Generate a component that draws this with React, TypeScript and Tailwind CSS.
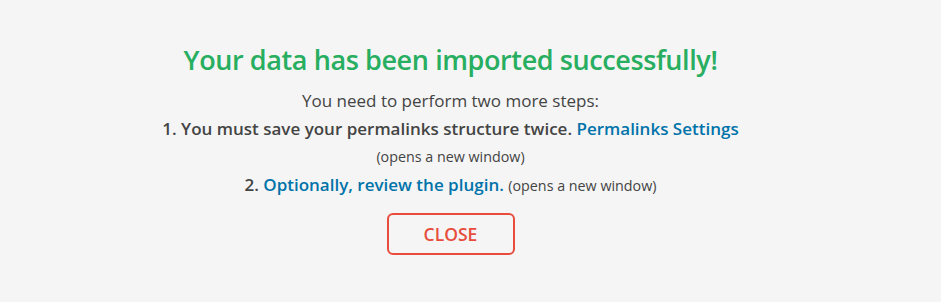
export default function App() {
  return (
    <div
      className="w-[941px] h-[302px] bg-[#f5f5f5] flex flex-col items-center pt-[40px] pr-[40px] text-[#444]"
      style={{ fontFamily: '"Open Sans", "Noto Sans", sans-serif' }}
    >
      <h2 className="text-[27px] leading-[40px] font-semibold text-[#27ae60] tracking-[-0.4px]">
        Your data has been imported successfully!
      </h2>
      <p className="mt-[9px] text-[17px] leading-[24px]">You need to perform two more steps:</p>
      <p className="mt-[4px] text-[17px] leading-[24px] font-semibold">
        1. You must save your permalinks structure twice.{" "}
        <a className="text-[#0073aa]">Permalinks Settings</a>
      </p>
      <p className="mt-[4px] text-[14.3px] leading-[24px]">(opens a new window)</p>
      <p className="mt-[4px] text-[17px] leading-[24px]">
        <span className="font-semibold">2. </span>
        <a className="font-semibold text-[#0073aa]">Optionally, review the plugin.</a>{" "}
        <span className="text-[14.3px]">(opens a new window)</span>
      </p>
      <button className="mt-[15px] w-[128px] h-[42px] border-2 border-[#e74c3c] rounded-[6px] text-[#e74c3c] text-[17.5px] font-semibold uppercase">
        Close
      </button>
    </div>
  );
}
